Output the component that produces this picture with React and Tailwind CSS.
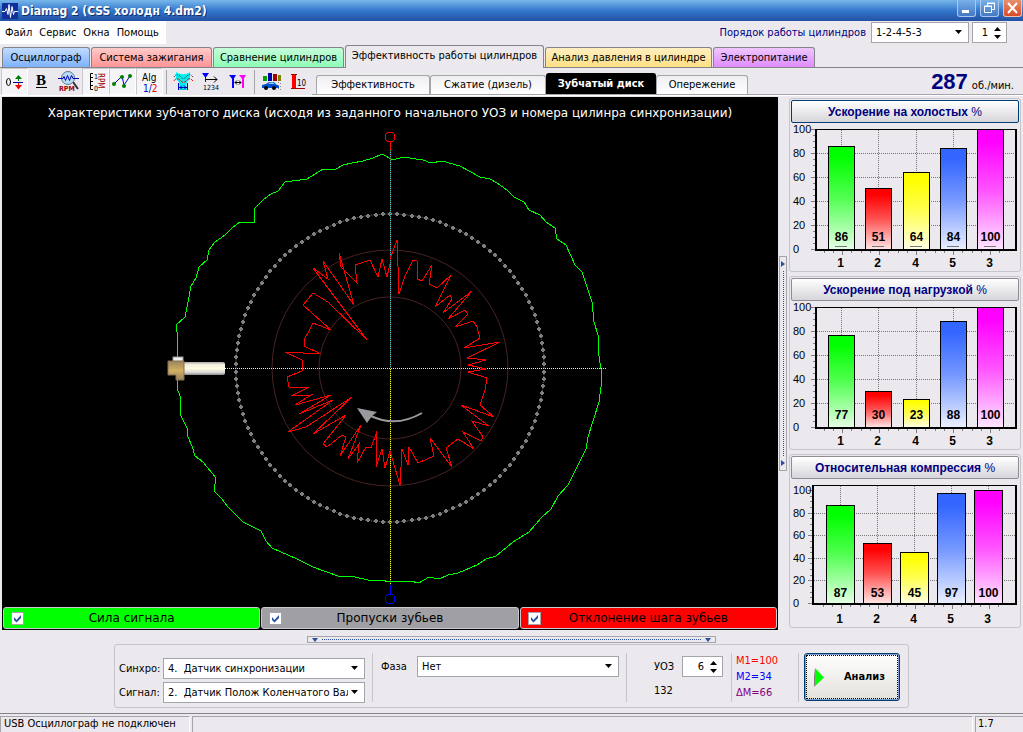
import React, { useState } from "react";

const mainTabs = [
  { label: "Осциллограф", className: "w-[88px] bg-linear-to-b from-[#c0dafe] to-[#7fb2fb]" },
  { label: "Система зажигания", className: "w-[121px] bg-linear-to-b from-[#ffcaca] to-[#ff9494]" },
  { label: "Сравнение цилиндров", className: "w-[131px] bg-linear-to-b from-[#c4fedb] to-[#8dfdb6]" },
  { label: "Эффективность работы цилиндров", active: true, className: "w-[199px]" },
  { label: "Анализ давления в цилиндре", className: "w-[167px] bg-linear-to-b from-[#ffefc0] to-[#ffe084]" },
  { label: "Электропитание", className: "w-[102px] bg-linear-to-b from-[#efc6fe] to-[#df8cfd]" },
];

const subTabs = [
  { label: "Эффективность", className: "w-[114px]" },
  { label: "Сжатие (дизель)", className: "w-[116px]" },
  { label: "Зубчатый диск", active: true, className: "w-[110px]" },
  { label: "Опережение", className: "w-[92px]" },
];

const barColors = ["#00ff00", "#ff0000", "#ffff00", "#3366ff", "#ff00ff"];
const cylinders = [1, 2, 4, 5, 3];

const charts = [
  { id: "idle", title: "Ускорение на холостых", values: [86, 51, 64, 84, 100], left: 24, full: 5, bottom: 125, x0: 37, barW: 27, focused: true },
  { id: "load", title: "Ускорение под нагрузкой", values: [77, 30, 23, 88, 100], left: 24, full: 5, bottom: 125, x0: 37, barW: 27 },
  { id: "comp", title: "Относительная компрессия", values: [87, 53, 45, 97, 100], left: 21, full: 10, bottom: 123, x0: 35, barW: 29 },
];

const signalLine =
  "177,357 177,347 178,338 176,325 185,317 187,307 189,297 191,286 196,278 199,267 207,260 209,250 215,242 225,235 232,228 240,222 254,223 255,208 263,200 271,194 278,191 285,182 307,179 323,169 336,169 343,165 352,163 363,161 373,158 382,154 393,160 403,157 423,160 431,163 442,161 460,166 480,177 490,179 497,183 507,190 514,197 524,202 529,210 540,215 546,222 555,228 557,239 566,245 575,265 582,272 592,302 594,322 598,335 598,350 601,369 602,379 599,402 588,437 586,449 577,467 568,485 558,496 551,509 542,517 529,532 513,542 496,556 486,559 477,565 458,573 448,575 439,579 429,577 419,583 410,581 391,582 380,580 368,580 355,577 338,576 313,567 297,559 272,548 266,541 261,531 243,522 228,507 222,499 214,491 216,478 203,462 195,456 192,446 188,437 187,428 181,416 180,396 177,388 177,379";

const deviationLine =
  "390,259 397,240 399,294 405,276 413,260 417,261 417,279 422,281 432,265 429,284 437,288 451,275 435,307 450,295 452,299 443,313 472,291 448,319 465,310 468,314 455,327 473,321 477,327 480,338 464,348 500,342 467,358 486,360 468,365 486,369 468,372 487,378 485,390 480,405 494,417 461,405 489,426 472,421 483,437 481,441 463,432 474,449 458,439 446,448 452,467 430,438 434,456 418,463 409,447 408,465 402,449 400,485 390,451 385,468 382,449 376,467 377,431 371,448 366,447 357,463 359,444 348,459 361,425 340,456 346,437 342,435 327,447 323,444 346,415 313,434 352,397 306,427 288,432 333,400 299,414 331,395 295,405 311,395 291,396 309,387 289,387 287,377 302,371 302,360 285,352 321,354 304,346 305,338 308,333 313,323 331,330 303,305 313,293 328,302 367,340 313,268 328,279 323,261 354,305 339,253 341,267 357,283 355,265 370,260 378,277 382,259 387,277 390,264";

const teeth = Array.from({ length: 134 }, (_, i) => {
  const angle = (i / 134) * Math.PI * 2;
  return [Math.round(390 + 154 * Math.sin(angle)), Math.round(368 - 154 * Math.cos(angle))];
});

const DropArrow = () => (
  <svg viewBox="0 0 7 4" className="pointer-events-none absolute right-[7px] top-[8px] h-1 w-[7px]">
    <path d="M0 0h7L3.500 4z" fill="#000" />
  </svg>
);

const SelectBox = ({ id, value, className }) => (
  <div className={`relative ${className}`}>
    <select
      id={id}
      defaultValue={value}
      className="block h-[21px] w-full appearance-none border border-[#a5a4aa] bg-white pl-1 pr-4 outline-none"
    >
      <option>{value}</option>
    </select>
    <DropArrow />
  </div>
);

const SpinBox = ({ id, label, initial, className }) => {
  const [value, setValue] = useState(initial);
  return (
    <div className={`flex h-[21px] border border-[#a5a4aa] bg-white ${className}`}>
      <input
        id={id}
        aria-label={label}
        value={value}
        inputMode="numeric"
        onChange={(e) => setValue(Number(e.target.value) || 0)}
        className="w-full min-w-0 flex-1 text-right outline-none"
      />
      <div className="flex w-[18px] flex-col items-center justify-center gap-1">
        <button type="button" aria-label="Больше" onClick={() => setValue(value + 1)}>
          <svg viewBox="0 0 7 4" className="block h-1 w-[7px]"><path d="M0 4h7L3.500 0z" /></svg>
        </button>
        <button type="button" aria-label="Меньше" onClick={() => setValue(value - 1)}>
          <svg viewBox="0 0 7 4" className="block h-1 w-[7px]"><path d="M0 0h7L3.500 4z" /></svg>
        </button>
      </div>
    </div>
  );
};

const ToolButton = ({ label, pressed, children }) => (
  <button
    type="button"
    aria-label={label}
    aria-pressed={!!pressed}
    className={`h-[27px] w-[27px] shrink-0 ${pressed ? "border border-t-[#c9c8ce] border-l-[#c9c8ce] border-r-white border-b-white bg-[#f5f4f7]" : "border border-transparent"}`}
  >
    <svg viewBox="0 0 25 25" className="block h-[25px] w-[25px] font-['DejaVu_Sans_Condensed','DejaVu_Sans',sans-serif]">
      {children}
    </svg>
  </button>
);

const Separator = () => <span className="mx-[3px] h-6 w-px shrink-0 bg-[#a5a4aa]" />;

const Toolbar = () => (
  <div className="flex items-center">
    <ToolButton label="Смещение нуля" pressed>
      <ellipse cx="6.500" cy="13" rx="2" ry="3.500" fill="none" stroke="#000" />
      <path d="M11 13.500h10" stroke="#0000a0" />
      <path d="M16.500 7v5" stroke="#008000" />
      <path d="M13 10l3.500-4L20 10z" fill="#008000" />
      <path d="M16.500 14v5" stroke="#f00" />
      <path d="M13 16l3.500 4.500L20 16z" fill="#f00" />
    </ToolButton>
    <ToolButton label="Жирный">
      <text x="7" y="16" fontSize="15" fontWeight="bold" fontFamily="Liberation Serif, serif">B</text>
      <path d="M7 18.500h11" stroke="#000" />
    </ToolButton>
    <ToolButton label="Обороты">
      <path d="M17 13l5 7" stroke="#303030" strokeWidth="2" />
      <circle cx="12" cy="9" r="6.500" fill="#b7dcf8" stroke="#607890" />
      <path d="M2 9.500h5l1-2 1.500 4 2-5 2 5 2-5 1.500 3h6" fill="none" stroke="#0000b0" />
      <text x="3" y="22" fontSize="7" fontWeight="bold" fill="#a00000">RPM</text>
    </ToolButton>
    <ToolButton label="Шкала оборотов" pressed>
      <path d="M10 4.500H7.500v16H10M7 8.500h3M7 12.500h3M7 16.500h3" fill="none" stroke="#000" />
      <text x="11" y="10" fontSize="7">1</text>
      <text x="11" y="22" fontSize="7">0</text>
      <text transform="translate(15 4) rotate(90)" fontSize="8" fill="#a00000">RPM</text>
    </ToolButton>
    <ToolButton label="Точки" pressed>
      <path d="M4 15l8-8 2 9 6-9" fill="none" stroke="#0000d0" />
      <g fill="#008000">
        <circle cx="4" cy="15" r="2" /><circle cx="12" cy="8" r="2" />
        <circle cx="14" cy="17" r="2" /><circle cx="20" cy="7" r="2" />
      </g>
    </ToolButton>
    <ToolButton label="Алгоритм" pressed>
      <text x="5" y="12" fontSize="10">Alg</text>
      <text x="6" y="23" fontSize="10" fill="#0000d0">1/<tspan fill="#f00">2</tspan></text>
    </ToolButton>
    <Separator />
    <ToolButton label="Синхронизация">
      <path d="M5 3c4 3 10 3 14 0v7c-4 3-4 6-3 11H8c1-5 1-8-3-11z" fill="#00f0f0" />
      <path d="M3 8c2-4 5-2 7 0s3 2 5 0 4-4 7 0" fill="none" stroke="#303030" strokeDasharray="1 1" />
      <path d="M3 12c2-4 5-2 7 0s3 2 5 0 4-4 7 0" fill="none" stroke="#f00" strokeDasharray="3 1" />
      <path d="M7.500 14v7M16.500 14v7M8 18.500h8M11 16.500l-2 2 2 2M13 16.500l2 2-2 2" fill="none" stroke="#0000c0" />
    </ToolButton>
    <ToolButton label="Нумерация цилиндров">
      <path d="M4 4h7L7.500 9zM7 6h1v7H7z" fill="#0000ff" />
      <path d="M8 10.500h11M16 7.500l3 3-3 3" fill="none" stroke="#000" />
      <text x="5" y="21" fontSize="7">1234</text>
    </ToolButton>
    <ToolButton label="Маркеры">
      <path d="M4 6h7l-3 5zM7 7h2v12H7z" fill="#0000ff" />
      <path d="M14 6h7l-3 5zM17 7h2v12h-2z" fill="#f0f" />
      <path d="M10 13.500h6M12 11.500l-2 2 2 2M14 11.500l2 2-2 2" fill="none" stroke="#000" />
    </ToolButton>
    <Separator />
    <ToolButton label="Разгон автомобиля">
      <path d="M4 7h4v5H4z" fill="#00a000" />
      <path d="M9 4h4v8H9z" fill="#0000b0" />
      <path d="M14 5h4v7h-4z" fill="#a00000" />
      <path d="M19 6h3v6h-3z" fill="#808000" />
      <path d="M3 16l4-1 3-2h5l3 3h2v3H3z" fill="#0050d0" />
      <path d="M9 15l2-1.500h3l2 1.500z" fill="#90d0f0" />
      <circle cx="7" cy="19" r="2" /><circle cx="15" cy="19" r="2" />
      <path d="M19.500 13v8M21.500 14v7" stroke="#888" strokeDasharray="1 2" />
    </ToolButton>
    <ToolButton label="Первые 10">
      <path d="M6 6h4v13H6z" fill="#f00" />
      <path d="M5 5.500h6M5 19.500h14" stroke="#a00000" />
      <text x="11" y="17" fontSize="8">10</text>
    </ToolButton>
  </div>
);

const DiskPlot = () => (
  <svg viewBox="2 126 776 481" className="block w-full" role="img" aria-label="Характеристики зубчатого диска">
    <circle cx="390" cy="368" r="71" fill="none" stroke="#4a2222" />
    <circle cx="390" cy="368" r="118" fill="none" stroke="#4a2222" />
    <circle cx="390" cy="368" r="154" fill="none" stroke="#808080" strokeDasharray="1 1" />
    {teeth.map(([x, y], i) => (
      <path key={i} d={`M${x - 1} ${y - 2}h2v1h1v2h-1v1h-2v-1h-1v-2h1z`} fill="#808080" />
    ))}
    <g shapeRendering="crispEdges" fill="none">
      <path d="M225 368.500h382" stroke="#e8e8e8" strokeDasharray="1 1" />
      <path d="M390.500 150v218" stroke="#702828" />
      <path d="M390.500 150v218" stroke="#20d8e8" strokeDasharray="1 1" />
      <path d="M390.500 369v216" stroke="#404000" />
      <path d="M390.500 369v216" stroke="#ffff00" strokeDasharray="1 1" />
      <path d="M390.500 142v8" stroke="#f00" />
      <path d="M390.500 585v9" stroke="#00f" />
      <polyline points={signalLine} stroke="#00ff00" />
      <polyline points={deviationLine} stroke="#ff0000" />
      <circle cx="390" cy="137" r="5" stroke="#f00" />
      <circle cx="390" cy="599" r="5" stroke="#00f" />
    </g>
    {/* rotation arrow */}
    <path d="M371 416Q396 428 422 413" fill="none" stroke="#9a9a9e" strokeWidth="2" />
    <path d="M357 408l20 4-5 4-5 7z" fill="#9a9a9e" />
    {/* sensor */}
    <defs>
      <linearGradient id="rod" x2="0" y2="1">
        <stop offset="0" stopColor="#a8a8a8" /><stop offset="0.2" stopColor="#f4f0e0" />
        <stop offset="0.5" stopColor="#fffce0" /><stop offset="0.8" stopColor="#d8d8d8" />
        <stop offset="1" stopColor="#8a8a8a" />
      </linearGradient>
      <linearGradient id="cap" x2="0" y2="1">
        <stop offset="0" stopColor="#9a8560" /><stop offset="0.5" stopColor="#d2b060" /><stop offset="1" stopColor="#9a8264" />
      </linearGradient>
    </defs>
    <rect x="183" y="362" width="42" height="13" rx="2" fill="url(#rod)" />
    <rect x="173" y="357" width="10" height="5" fill="#eee" stroke="#999" />
    <path d="M168 361h16v19h-8v-5h-8z" fill="url(#cap)" stroke="#857052" />
  </svg>
);

const LegendItem = ({ label, className }) => (
  <label className={`flex h-[22px] min-w-0 flex-1 items-center rounded-[3px] border border-[#c9c8ce] pl-[7px] pr-5 ${className}`}>
    <span className="relative h-[13px] w-[13px] shrink-0">
      <input type="checkbox" defaultChecked className="peer block h-[13px] w-[13px] appearance-none border border-[#a5a4aa] bg-white" />
      <svg viewBox="0 0 13 13" className="pointer-events-none absolute inset-0 hidden h-[13px] w-[13px] peer-checked:block">
        <path d="M3 5l2.500 3L10 3v3L5.500 10.500 3 8z" fill="#2850a0" />
      </svg>
    </span>
    <span className="flex-1 text-center font-['DejaVu_Sans',sans-serif] text-[12px] whitespace-nowrap">{label}</span>
  </label>
);

const BarChart = ({ id, title, values, left, full, bottom, x0, barW, focused }) => {
  const yOf = (v) => Math.round(bottom - ((bottom - full) * v) / 100);
  const step = id === "comp" ? 37 : 37.25;
  const xs = values.map((_, i) => Math.round(x0 + i * step));
  const center = (x) => Math.floor(x + barW / 2) + 0.5;

  return (
    <section className="rounded-[3px] border border-[#c6c5cb] px-px pt-px">
      <button
        type="button"
        className={`block h-[23px] w-full truncate rounded-[2px] border bg-linear-to-b from-white to-[#d6d5da] font-['Liberation_Sans',sans-serif] text-[12px] leading-[20px] font-bold text-[#000080] ${focused ? "border-[#003c74]" : "border-[#8e8d94]"}`}
      >
        {title} <span className="font-normal">%</span>
      </button>
      <svg viewBox="0 -1 228 148" className="block w-full overflow-visible font-['Liberation_Sans',sans-serif]">
        <defs>
          {barColors.map((color, i) => (
            <linearGradient key={color} id={`${id}-${i}`} x2="0" y2="1">
              <stop offset="0.1" stopColor={color} />
              <stop offset="0.5" stopColor={color} stopOpacity="0.68" />
              <stop offset="1" stopColor={color} stopOpacity="0.1" />
            </linearGradient>
          ))}
        </defs>
        <g shapeRendering="crispEdges">
          {[20, 40, 60, 80].map((v) => (
            <path key={v} d={`M${left} ${yOf(v) + 0.5}H225`} stroke="#777" strokeDasharray="1 1" />
          ))}
          {xs.map((x) => (
            <path key={x} d={`M${center(x)} 6V${bottom}`} stroke="#777" strokeDasharray="1 1" />
          ))}
          {Array.from({ length: 21 }, (_, i) => (
            <path key={i} d={`M${left} ${yOf(i * 5) + 0.5}h${i % 4 ? -2 : -4}`} stroke="#808080" />
          ))}
          {Array.from({ length: 20 }, (_, i) => (
            <path key={i} d={`M${Math.round(center(xs[0]) - 18 + i * 9.25)}.5 ${bottom}v${i % 4 === 2 ? 6 : 4}`} stroke="#808080" />
          ))}
          <path d={`M${left} 5.500H225`} stroke="#000" />
          <path d={`M${left + 1} 5V${bottom}M225 5V${bottom + 1}`} stroke="#000" strokeWidth="2" />
          {values.map((v, i) => (
            <g key={i}>
              <rect x={xs[i]} y={yOf(v)} width={barW} height={bottom - yOf(v)} fill="#fff" />
              <rect x={xs[i] + 0.5} y={yOf(v) + 0.5} width={barW - 1} height={bottom - yOf(v)} fill={`url(#${id}-${i})`} stroke="#000" />
              {focused && <path d={`M${xs[i] + 7} ${bottom - 2.5}h12`} stroke="#777" />}
            </g>
          ))}
          <path d={`M${left} ${bottom + 0.5}H226`} stroke="#000" strokeWidth="2" />
        </g>
        <g fontSize="12" fontWeight="bold" textAnchor="middle">
          {values.map((v, i) => (
            <text key={i} x={center(xs[i])} y="117">{v}</text>
          ))}
          {cylinders.map((n, i) => (
            <text key={n} x={center(xs[i]) - 1} y="143">{n}</text>
          ))}
        </g>
        <g fontSize="11">
          {[0, 20, 40, 60, 80, 100].map((v) => (
            <text key={v} x="2" y={yOf(v) + 4}>{v}</text>
          ))}
        </g>
      </svg>
    </section>
  );
};

const TitleBar = () => (
  <header className="flex h-[21px] items-center bg-linear-to-b from-[#78b6ea] via-[#3478cc] to-[#2450a4] pl-[2px] text-white">
    <svg viewBox="0 0 16 16" className="h-4 w-4">
      <path d="M0 0h16v16H0z" fill="#10309c" />
      <path d="M0 8.500h3l1.500-3 1.500 6 1-10 1.500 13 1.500-11 1.500 8 1-3H16" fill="none" stroke="#fff" />
    </svg>
    <h1 className="ml-[3px] flex-1 truncate text-[12px] leading-4 font-bold text-shadow-[1px_1px_0_#10306c]">
      Diamag 2 (CSS холодн 4.dm2)
    </h1>
    <div className="flex gap-1 self-start pr-px">
      <button type="button" aria-label="Свернуть" className="h-[17px] w-[19px] rounded-b-[3px] border border-t-0 border-[#a8c8f0] bg-linear-to-b from-[#78b0e8] to-[#4478c4]">
        <svg viewBox="0 0 17 16" className="block"><path d="M4 10h7v3H4z" fill="#fff" /></svg>
      </button>
      <button type="button" aria-label="Восстановить" className="h-[17px] w-[19px] rounded-b-[3px] border border-t-0 border-[#a8c8f0] bg-linear-to-b from-[#78b0e8] to-[#4478c4]">
        <svg viewBox="0 0 17 16" className="block">
          <path d="M6.500 6V3.500h7v6H11M6 3h8M3.500 6.500h7v6h-7zM3 6h8" fill="none" stroke="#fff" />
        </svg>
      </button>
      <button type="button" aria-label="Закрыть" className="h-[17px] w-[19px] rounded-b-[3px] border border-t-0 border-[#f0c0b0] bg-linear-to-b from-[#e89070] to-[#d84820]">
        <svg viewBox="0 0 17 16" className="block"><path d="M4 3l9 10M13 3L4 13" stroke="#fff" strokeWidth="2" /></svg>
      </button>
    </div>
  </header>
);

const App = () => {
  return (
    <div className="flex flex-col bg-[#ebe9ed] font-['DejaVu_Sans_Condensed','DejaVu_Sans',sans-serif] text-[11px] leading-[14px] text-black">
      <TitleBar />

      {/* Menu */}
      <div className="flex h-[23px] items-start justify-between">
        <nav className="flex h-[23px] items-center gap-[7px] bg-white pl-[5px] pr-[7px]">
          {["Файл", "Сервис", "Окна", "Помощь"].map((item) => (
            <button key={item} type="button">{item}</button>
          ))}
        </nav>
        <div className="flex items-center pt-px pr-4">
          <label htmlFor="order" className="mr-[5px] text-[#000080]">Порядок работы цилиндров</label>
          <SelectBox id="order" value="1-2-4-5-3" className="mr-[3px] w-[98px]" />
          <SpinBox id="cylinder" label="Номер цилиндра" initial={1} className="w-[35px]" />
        </div>
      </div>

      {/* Tabs */}
      <div className="flex h-6 items-end gap-px border-b border-[#85848a] pl-[2px]" role="tablist">
        {mainTabs.map(({ label, active, className }) => (
          <button
            key={label}
            type="button"
            role="tab"
            aria-selected={!!active}
            className={`rounded-t-[3px] border border-b-0 border-[#85848a] whitespace-nowrap ${active ? "-mb-px h-[23px] bg-[#ebe9ed] pb-0.5" : "h-5"} ${className}`}
          >
            {label}
          </button>
        ))}
      </div>

      {/* Toolbar */}
      <div className="flex h-[28px] items-end border-b border-white pl-[1px]">
        <Toolbar />
        <div className="flex h-full flex-1 items-end border-b border-[#a5a4aa]">
          <div className="ml-1 flex items-end" role="tablist">
            {subTabs.map(({ label, active, className }) => (
              <button
                key={label}
                type="button"
                role="tab"
                aria-selected={!!active}
                className={`rounded-t-[3px] border border-b-0 whitespace-nowrap ${active ? "h-[21px] border-black bg-black font-bold text-white" : "h-[19px] border-[#a5a4aa] bg-linear-to-b from-[#efeef1] to-white"} ${className}`}
              >
                {label}
              </button>
            ))}
          </div>
          <p className="ml-auto flex items-baseline gap-1 pr-[9px]">
            <strong className="font-['Liberation_Sans',sans-serif] text-[22px] leading-[24px] text-[#000080]">287</strong>
            <span>об./мин.</span>
          </p>
        </div>
      </div>

      <main className="flex items-stretch pl-[2px] pr-[2px] pt-px">
        <div className="min-w-0 flex-1 bg-black">
          <h2 className="h-[29px] truncate text-center font-['DejaVu_Sans',sans-serif] text-[12px] leading-[33px] text-white">
            Характеристики зубчатого диска (исходя из заданного начального УОЗ и номера цилинра синхронизации)
          </h2>
          <DiskPlot />
          <div className="flex gap-px px-px pb-px">
            <LegendItem label="Сила сигнала" className="bg-[#00ff00]" />
            <LegendItem label="Пропуски зубьев" className="bg-[#a09fa4]" />
            <LegendItem label="Отклонение шага зубьев" className="bg-[#ff0000]" />
          </div>
        </div>

        <div className="ml-px mr-0.5 flex h-[215px] w-2 flex-col items-center justify-between self-center border border-[#a5a4aa] py-1">
          <svg viewBox="0 0 4 6" className="h-1.5 w-1"><path d="M0 0l4 3-4 3z" fill="#2850a0" /></svg>
          <span className="my-1 w-px flex-1 border-l border-dotted border-[#2850a0]" />
          <svg viewBox="0 0 4 6" className="h-1.5 w-1"><path d="M0 0l4 3-4 3z" fill="#2850a0" /></svg>
        </div>

        <aside className="flex w-[232px] shrink-0 flex-col gap-1 pt-px">
          {charts.map((chart) => (
            <BarChart key={chart.id} {...chart} />
          ))}
        </aside>
      </main>

      <div className="mt-[6px] flex h-[7px] w-[409px] items-center gap-1 self-center border border-[#a5a4aa] px-1">
        <svg viewBox="0 0 6 4" className="h-1 w-1.5"><path d="M0 0h6L3 4z" fill="#2850a0" /></svg>
        <span className="flex-1 border-t border-dotted border-[#2850a0]" />
        <svg viewBox="0 0 6 4" className="h-1 w-1.5"><path d="M0 0h6L3 4z" fill="#2850a0" /></svg>
      </div>

      {/* Settings */}
      <form className="mt-px flex items-start self-center rounded-[3px] border border-[#c6c5cb] px-1 pt-2 pb-1" onSubmit={(e) => e.preventDefault()}>
        <div className="mt-[5px] grid grid-cols-[44px_202px] items-center gap-y-[3px]">
          <label htmlFor="sync">Синхро:</label>
          <SelectBox id="sync" value={"4.\u00a0 Датчик синхронизации"} className="" />
          <label htmlFor="signal">Сигнал:</label>
          <SelectBox id="signal" value={"2.\u00a0 Датчик Полож Коленчатого Вал"} className="" />
        </div>
        <span className="ml-[7px] h-[49px] w-px bg-[#c6c5cb]" />
        <div className="ml-2 mt-[3px] flex items-center">
          <label htmlFor="phase" className="w-9">Фаза</label>
          <SelectBox id="phase" value="Нет" className="w-[202px]" />
        </div>
        <span className="ml-[7px] h-[49px] w-px bg-[#c6c5cb]" />
        <div className="ml-[27px] mt-[3px]">
          <div className="flex items-center">
            <label htmlFor="uoz" className="w-7">УОЗ</label>
            <SpinBox id="uoz" initial={6} className="w-[41px]" />
          </div>
          <p className="mt-[7px]">132</p>
        </div>
        <span className="ml-2 h-[49px] w-px bg-[#c6c5cb]" />
        <div className="ml-1 w-[62px] leading-4">
          <p className="text-[#ff0000]">M1=100</p>
          <p className="text-[#0000ff]">M2=34</p>
          <p className="text-[#800080]">ΔM=66</p>
        </div>
        <span className="mr-px h-[49px] w-px bg-[#c6c5cb]" />
        <button
          type="submit"
          className="mx-1 flex h-12 w-24 items-center rounded-[3px] border border-[#003c74] bg-linear-to-b from-white to-[#e2e1da] p-px font-bold shadow-[inset_0_0_0_1px_#7f9fd4]"
        >
          <span className="flex h-full w-full items-center border border-dotted border-black pl-[7px]">
            <svg viewBox="0 0 10 19" className="h-[19px] w-[10px]">
              <path d="M0 0v19l2-3z" fill="#808080" />
              <path d="M1 0l9 9.500L1 18z" fill="#00ff00" />
            </svg>
            <span className="flex-1 pl-2 text-center">Анализ</span>
          </span>
        </button>
      </form>

      {/* Status bar */}
      <footer className="mt-[5px] flex h-[19px] gap-0.5 border-t border-[#85848a] pt-[2px]">
        <span className="w-[190px] border border-t-[#a5a4aa] border-l-[#a5a4aa] border-r-white border-b-0 pl-[3px]">USB Осциллограф не подключен</span>
        <span className="flex-1 border border-t-[#a5a4aa] border-l-[#a5a4aa] border-r-white border-b-0" />
        <span className="w-12 border border-r-0 border-t-[#a5a4aa] border-l-[#a5a4aa] border-b-0 pl-[2px]">1.7</span>
      </footer>
    </div>
  );
};

export default App;
